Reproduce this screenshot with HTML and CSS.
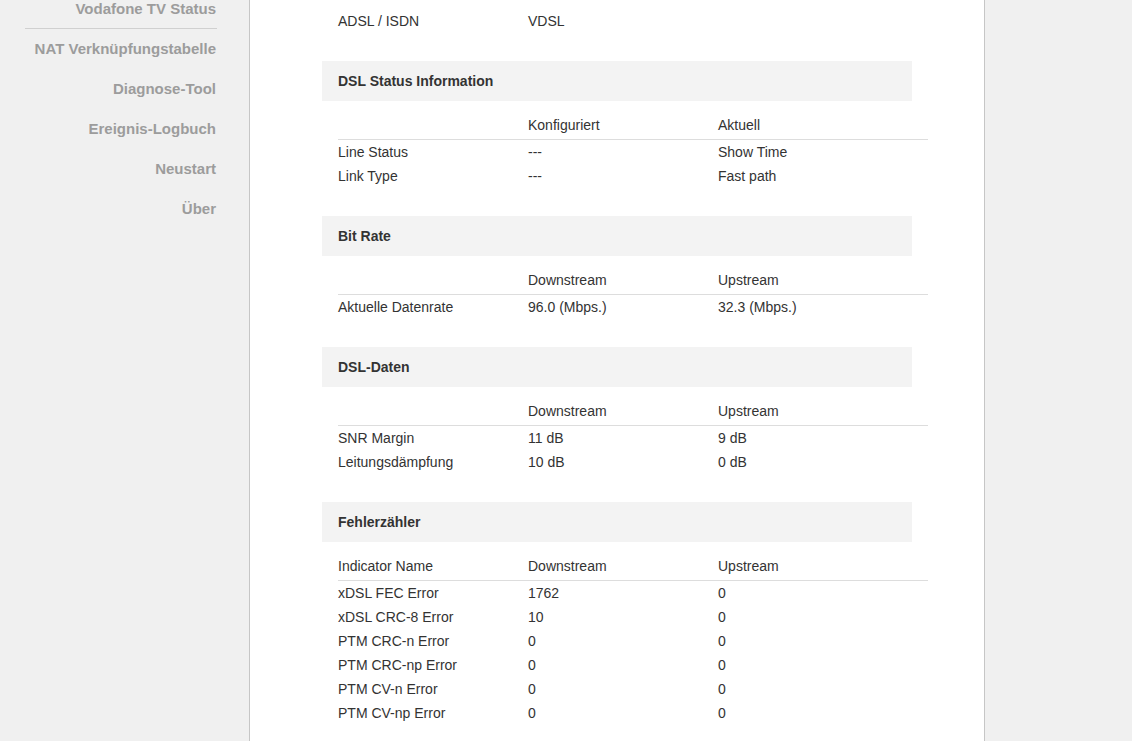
FILE: index.html
```html
<!DOCTYPE html>
<html lang="de">
<head>
  <meta charset="UTF-8" />
  <meta name="viewport" content="width=device-width, initial-scale=1.0" />
  <title>DSL Status</title>
  <link rel="stylesheet" href="styles.css">
</head>
<body>
  <div class="page">
    <!-- Left navigation -->
    <nav class="sidebar">
      <a class="nav-item nav-item-last-group">Vodafone TV Status</a>
      <a class="nav-item">NAT Verknüpfungstabelle</a>
      <a class="nav-item">Diagnose-Tool</a>
      <a class="nav-item">Ereignis-Logbuch</a>
      <a class="nav-item">Neustart</a>
      <a class="nav-item">Über</a>
    </nav>

    <main class="content">
      <table class="info-table top-table">
        <tr><td>ADSL / ISDN</td><td>VDSL</td><td></td></tr>
      </table>

      <section class="block">
        <div class="block-title">DSL Status Information</div>
        <table class="info-table">
          <thead>
            <tr><th></th><th>Konfiguriert</th><th>Aktuell</th></tr>
          </thead>
          <tbody>
            <tr><td>Line Status</td><td>---</td><td>Show Time</td></tr>
            <tr><td>Link Type</td><td>---</td><td>Fast path</td></tr>
          </tbody>
        </table>
      </section>

      <section class="block">
        <div class="block-title">Bit Rate</div>
        <table class="info-table">
          <thead>
            <tr><th></th><th>Downstream</th><th>Upstream</th></tr>
          </thead>
          <tbody>
            <tr><td>Aktuelle Datenrate</td><td>96.0 (Mbps.)</td><td>32.3 (Mbps.)</td></tr>
          </tbody>
        </table>
      </section>

      <section class="block">
        <div class="block-title">DSL-Daten</div>
        <table class="info-table">
          <thead>
            <tr><th></th><th>Downstream</th><th>Upstream</th></tr>
          </thead>
          <tbody>
            <tr><td>SNR Margin</td><td>11 dB</td><td>9 dB</td></tr>
            <tr><td>Leitungsdämpfung</td><td>10 dB</td><td>0 dB</td></tr>
          </tbody>
        </table>
      </section>

      <section class="block">
        <div class="block-title">Fehlerzähler</div>
        <table class="info-table">
          <thead>
            <tr><th>Indicator Name</th><th>Downstream</th><th>Upstream</th></tr>
          </thead>
          <tbody>
            <tr><td>xDSL FEC Error</td><td>1762</td><td>0</td></tr>
            <tr><td>xDSL CRC-8 Error</td><td>10</td><td>0</td></tr>
            <tr><td>PTM CRC-n Error</td><td>0</td><td>0</td></tr>
            <tr><td>PTM CRC-np Error</td><td>0</td><td>0</td></tr>
            <tr><td>PTM CV-n Error</td><td>0</td><td>0</td></tr>
            <tr><td>PTM CV-np Error</td><td>0</td><td>0</td></tr>
          </tbody>
        </table>
      </section>
    </main>
  </div>
</body>
</html>
```

FILE: styles.css
```css
body {
  margin: 0;
  padding: 0;
  font-family: 'Liberation Sans', Arial, sans-serif;
  font-size: 14px;
  color: #333;
  background-color: #f0f0f0;
  overflow: hidden;
}
.page {
  display: flex;
  height: 100vh;
}
.sidebar {
  width: 250px;
  flex-shrink: 0;
  box-sizing: border-box;
  padding: 0 33px 0 25px;
  border-right: 1px solid #c6c6c6;
  display: flex;
  flex-direction: column;
  text-align: right;
}
.nav-item {
  display: block;
  line-height: 40px;
  font-size: 15px;
  font-weight: bold;
  color: #9c9c9c;
  text-decoration: none;
}
.nav-item-last-group {
  margin-top: -10px;
  margin-right: -1px;
  padding-right: 1px;
  line-height: 38px;
  border-bottom: 1px solid #d0d0d0;
}
.content {
  width: 735px;
  flex-shrink: 0;
  box-sizing: border-box;
  padding: 9px 0 0 72px;
  background-color: #fff;
  border-right: 1px solid #c6c6c6;
}
.info-table {
  width: 590px;
  margin-left: 16px;
  border-collapse: collapse;
  table-layout: fixed;
}
.info-table td,
.info-table th {
  width: 190px;
  padding: 0;
  text-align: left;
  font-weight: normal;
  line-height: 24px;
  white-space: nowrap;
}
.info-table td:last-child,
.info-table th:last-child {
  width: auto;
}
.info-table th {
  padding-bottom: 2px;
  border-bottom: 1px solid #ddd;
}
.top-table {
  margin-bottom: 28px;
}
.block {
  margin-bottom: 28px;
}
.block-title {
  width: 590px;
  height: 40px;
  box-sizing: border-box;
  padding: 0 16px;
  line-height: 40px;
  font-weight: bold;
  background-color: #f3f3f3;
  margin-bottom: 12px;
}
```
